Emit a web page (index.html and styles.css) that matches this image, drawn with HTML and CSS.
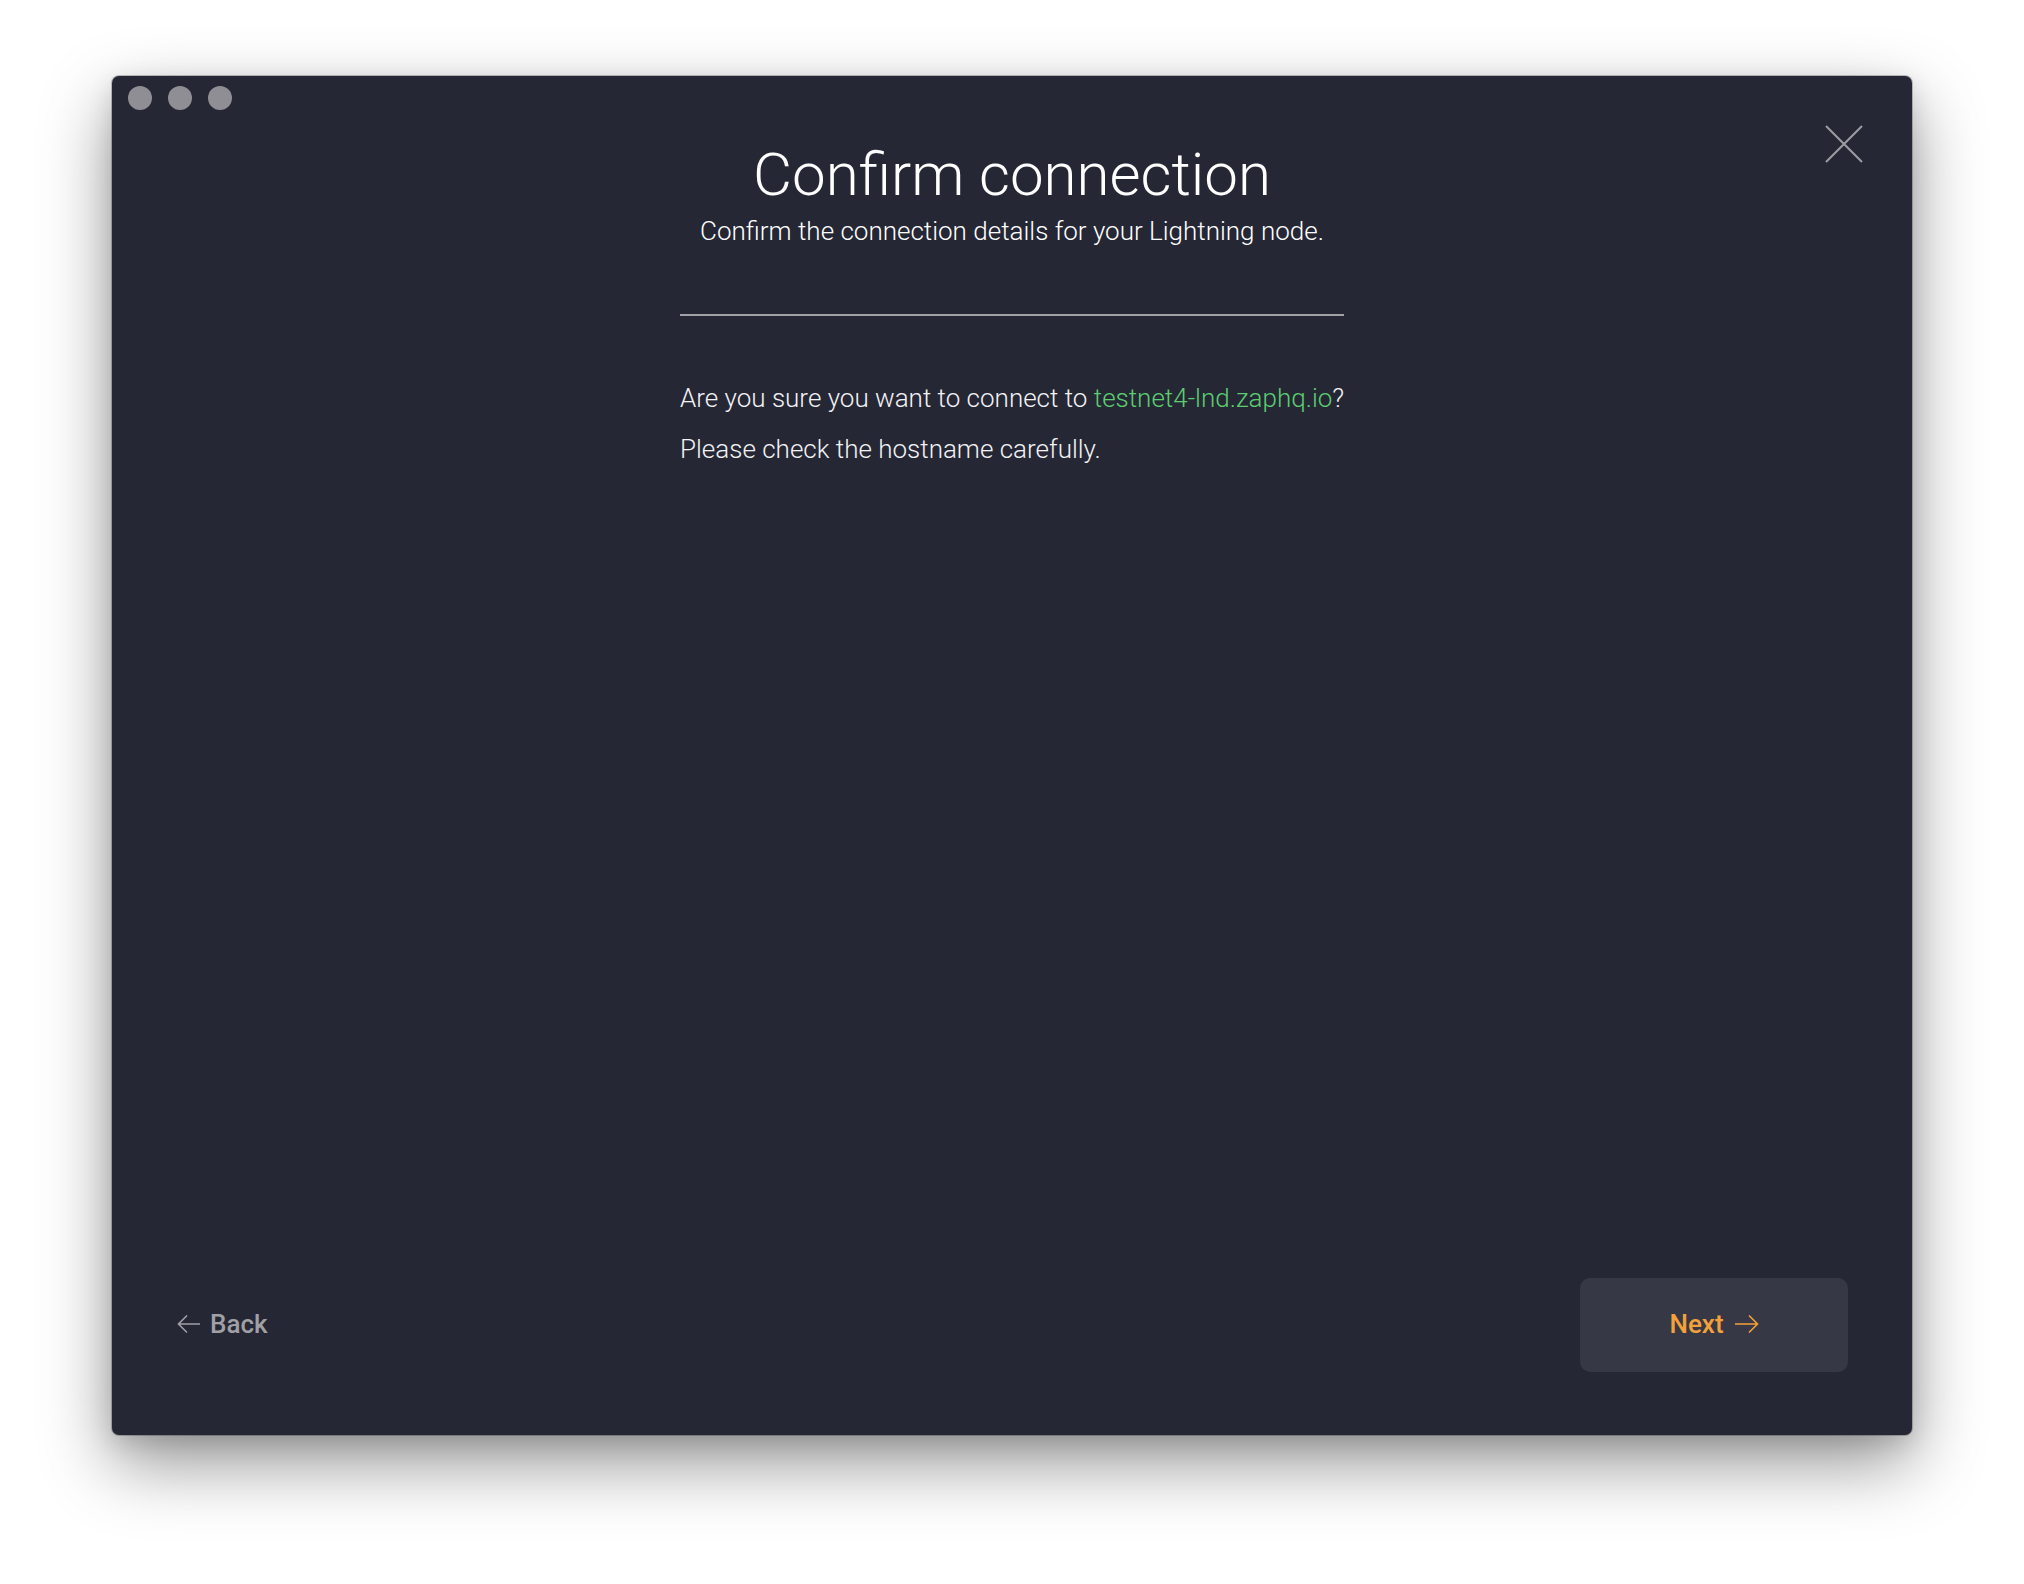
FILE: index.html
```html
<!DOCTYPE html>
<html lang="en">
<head>
<meta charset="utf-8">
<title>Confirm connection</title>
<link rel="stylesheet" href="styles.css">
</head>
<body>
  <div class="window">
    <div class="titlebar">
      <span class="dot"></span>
      <span class="dot"></span>
      <span class="dot"></span>
    </div>
    <button class="close" aria-label="Close">
      <svg width="38" height="38" viewBox="0 0 38 38"><path d="M1 1 L37 37 M37 1 L1 37" stroke="#9d9da3" stroke-width="2" fill="none"/></svg>
    </button>
    <main class="content">
      <header class="header">
        <h1 class="title">Confirm connection</h1>
        <p class="subtitle">Confirm the connection details for your Lightning node.</p>
      </header>
      <div class="divider"></div>
      <section class="body">
        <p class="text">Are you sure you want to connect to <span class="host">testnet4-lnd.zaphq.io</span>?</p>
        <p class="text second">Please check the hostname carefully.</p>
      </section>
    </main>
    <footer class="footer">
      <button class="back">
        <svg width="24" height="20" viewBox="0 0 24 20"><path d="M23 10 H1.5 M10 1.5 L1.5 10 L10 18.5" stroke="#a0a0a6" stroke-width="1.6" fill="none"/></svg>
        <span>Back</span>
      </button>
      <button class="next">
        <span>Next</span>
        <svg width="25" height="20" viewBox="0 0 25 20"><path d="M1 10 H23.5 M15 1.5 L23.5 10 L15 18.5" stroke="#f5a13a" stroke-width="1.6" fill="none"/></svg>
      </button>
    </footer>
  </div>
</body>
</html>
```
FILE: styles.css
```css
* { box-sizing: border-box; }

html, body {
  margin: 0;
  padding: 0;
  background: #ffffff;
}

body {
  width: 2024px;
  height: 1584px;
  padding: 76px 112px 149px 112px;
  font-family: Roboto, "Liberation Sans", sans-serif;
}

.window {
  position: relative;
  width: 1800px;
  height: 1359px;
  background: #252734;
  border-radius: 7px;
  box-shadow: 0 0 0 1px rgba(0, 0, 0, 0.22), 0 28px 70px rgba(0, 0, 0, 0.42), 0 8px 24px rgba(0, 0, 0, 0.12);
  display: flex;
  flex-direction: column;
  overflow: hidden;
}

.titlebar {
  display: flex;
  gap: 16px;
  padding: 10px 0 0 16px;
  height: 34px;
}

.dot {
  width: 24px;
  height: 24px;
  border-radius: 50%;
  background: #8f8e94;
}

.close {
  position: absolute;
  top: 49px;
  right: 49px;
  width: 38px;
  height: 38px;
  padding: 0;
  border: 0;
  background: transparent;
  display: block;
}

.close svg { display: block; }

.content {
  flex: 1;
  display: flex;
  flex-direction: column;
  align-items: center;
}

.header {
  text-align: center;
  margin-top: 29px;
}

.title {
  margin: 0;
  font-size: 60px;
  font-weight: 300;
  line-height: 72px;
  color: #ffffff;
}

.subtitle {
  margin: 2px 0 0 0;
  font-size: 26px;
  font-weight: 300;
  line-height: 36px;
  color: #ffffff;
}

.divider {
  width: 664px;
  height: 2px;
  background: #a0a0a6;
  margin-top: 65px;
}

.body {
  width: 664px;
  margin-top: 64px;
}

.text {
  margin: 0;
  font-size: 26px;
  font-weight: 300;
  line-height: 36px;
  color: #f2f2f4;
  white-space: nowrap;
}

.text.second { margin-top: 15px; }

.host { color: #5ccd70; }

.footer {
  display: flex;
  justify-content: space-between;
  align-items: center;
  padding: 0 64px 63px 64px;
}

.back {
  display: flex;
  align-items: center;
  gap: 9px;
  padding: 0;
  margin-left: 1px;
  margin-bottom: 2px;
  border: 0;
  background: transparent;
  color: #a0a0a6;
  font-family: Roboto, "Liberation Sans", sans-serif;
  font-size: 26px;
  font-weight: 500;
}

.back svg, .next svg { display: block; }

.next {
  width: 268px;
  height: 94px;
  display: flex;
  align-items: center;
  justify-content: center;
  gap: 10px;
  padding: 0 0 2px 0;
  border: 0;
  border-radius: 10px;
  background: #363845;
  color: #f5a13a;
  font-family: Roboto, "Liberation Sans", sans-serif;
  font-size: 26px;
  font-weight: 500;
}
```
